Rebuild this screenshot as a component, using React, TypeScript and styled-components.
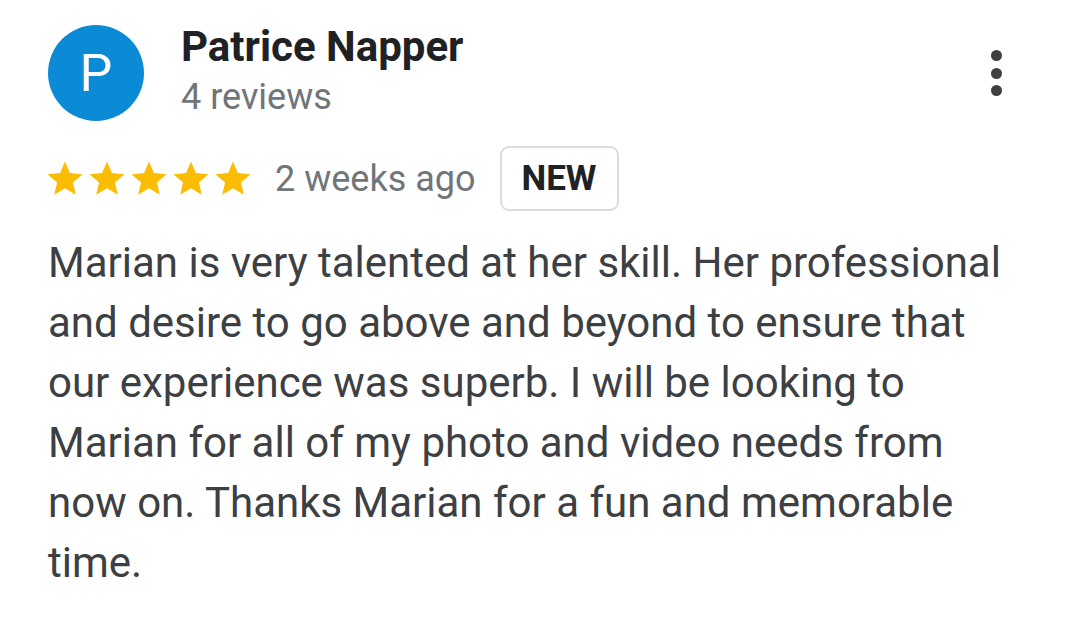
import styled, { createGlobalStyle } from "styled-components";

const GlobalStyle = createGlobalStyle`
  html, body {
    margin: 0;
    padding: 0;
    background: #ffffff;
    font-family: Roboto, "Liberation Sans", sans-serif;
  }
`;

const Card = styled.div`
  width: 1080px;
  height: 638px;
  box-sizing: border-box;
  padding: 25px 48px 0 48px;
  background: #fff;
`;

const Header = styled.div`
  display: flex;
  align-items: flex-start;
`;

const Avatar = styled.div`
  width: 96px;
  height: 96px;
  border-radius: 50%;
  background: #0b8bd6;
  color: #fff;
  display: flex;
  align-items: center;
  justify-content: center;
  font-size: 52px;
  flex-shrink: 0;
`;

const Author = styled.div`
  display: flex;
  flex-direction: column;
  margin-left: 37px;
  flex: 1;
`;

const Name = styled.div`
  font-size: 42px;
  font-weight: 700;
  color: #202124;
  line-height: 44px;
`;

const Count = styled.div`
  font-size: 36px;
  color: #70757a;
  line-height: 44px;
  margin-top: 6px;
`;

const MoreButton = styled.div`
  display: flex;
  flex-direction: column;
  align-items: center;
  gap: 6.5px;
  margin-top: 25px;
  margin-right: 30px;
`;

const Dot = styled.span`
  width: 11px;
  height: 11px;
  border-radius: 50%;
  background: #3c4043;
`;

const MetaRow = styled.div`
  display: flex;
  align-items: center;
  margin-top: 25px;
`;

const Stars = styled.div`
  display: flex;
  margin-left: -4px;
`;

const When = styled.span`
  font-size: 36px;
  color: #70757a;
  margin-left: 21px;
`;

const Badge = styled.span`
  margin-left: 25px;
  border: 2px solid #dadce0;
  border-radius: 9px;
  padding: 0 20px 0 19px;
  height: 61px;
  display: flex;
  align-items: center;
  font-size: 35px;
  font-weight: 700;
  color: #202124;
`;

const Body = styled.p`
  margin: 22px 0 0 0;
  width: 970px;
  font-size: 42px;
  line-height: 60px;
  color: #3c4043;
`;

const Star = () => (
  <svg width="42" height="42" viewBox="0 0 24 24">
    <path
      fill="#fbbc04"
      d="M12 17.27L18.18 21l-1.64-7.03L22 9.24l-7.19-.61L12 2 9.19 8.63 2 9.24l5.46 4.73L5.82 21z"
    />
  </svg>
);

const App = () => {
  return (
    <>
      <GlobalStyle />
      <Card>
        <Header>
          <Avatar>P</Avatar>
          <Author>
            <Name>Patrice Napper</Name>
            <Count>4 reviews</Count>
          </Author>
          <MoreButton>
            <Dot />
            <Dot />
            <Dot />
          </MoreButton>
        </Header>
        <MetaRow>
          <Stars>
            {[0, 1, 2, 3, 4].map((i) => (
              <Star key={i} />
            ))}
          </Stars>
          <When>2 weeks ago</When>
          <Badge>NEW</Badge>
        </MetaRow>
        <Body>
          Marian is very talented at her skill. Her professional and desire to
          go above and beyond to ensure that our experience was superb. I will
          be looking to Marian for all of my photo and video needs from now on.
          Thanks Marian for a fun and memorable time.
        </Body>
      </Card>
    </>
  );
};

export default App;
